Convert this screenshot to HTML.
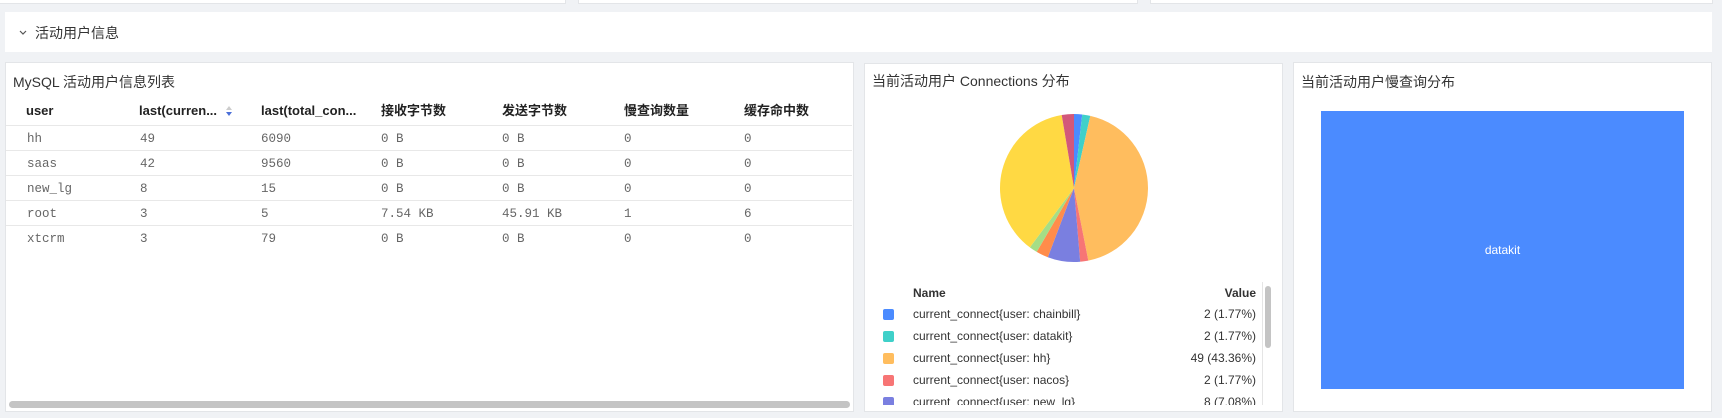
<!DOCTYPE html>
<html><head><meta charset="utf-8"><style>
*{box-sizing:border-box;margin:0;padding:0}
html,body{width:1722px;height:418px;overflow:hidden}
body{background:#f0f2f5;font-family:"Liberation Sans","Noto Sans CJK SC",sans-serif;position:relative;color:#333}
.card{position:absolute;background:#fff;border:1px solid #e3e5e8}
.title{position:absolute;left:8px;top:8px;font-size:14px;color:#333;line-height:18px}
.th{position:absolute;top:103px;font-size:13px;font-weight:bold;color:#222;line-height:16px;height:16px}
.td{position:absolute;font-family:"Liberation Mono",monospace;font-size:12.5px;color:#666;line-height:16px}
.line{position:absolute;left:6px;width:846px;height:1px;background:#e8e8e8}
.lg{position:absolute;font-size:12px;color:#333;line-height:15px}
.sw{position:absolute;width:11px;height:11px;border-radius:2px}
</style></head><body>
<div class="card" style="left:-1px;top:-10px;width:567px;height:14px"></div>
<div class="card" style="left:578px;top:-10px;width:560px;height:14px"></div>
<div class="card" style="left:1150px;top:-10px;width:563px;height:14px"></div>
<div style="position:absolute;left:5px;top:12px;width:1707px;height:40px;background:#fff"></div>
<svg style="position:absolute;left:19px;top:30px" width="8" height="6"><path d="M1 1L4 4L7 1" stroke="#555" fill="none" stroke-width="1.2"/></svg>
<div style="position:absolute;left:35px;top:24px;font-size:14px;color:#333;line-height:18px">活动用户信息</div>

<div class="card" style="left:5px;top:62px;width:849px;height:350px"><div class="title" style="left:7px;top:10px">MySQL 活动用户信息列表</div></div>
<div class="th" style="left:26px">user</div>
<div class="th" style="left:139px">last(curren...</div>
<svg style="position:absolute;left:225px;top:105px" width="8" height="12"><path d="M1 5L4 1L7 5Z" fill="#ccc"/><path d="M1 7L4 11L7 7Z" fill="#4b6fd8"/></svg>
<div class="th" style="left:261px">last(total_con...</div>
<div class="th" style="left:381px">接收字节数</div>
<div class="th" style="left:502px">发送字节数</div>
<div class="th" style="left:624px">慢查询数量</div>
<div class="th" style="left:744px">缓存命中数</div>
<div class="line" style="top:125px"></div><div class="line" style="top:150px"></div><div class="line" style="top:175px"></div><div class="line" style="top:200px"></div><div class="line" style="top:225px"></div>
<div class="td" style="left:27px;top:131px">hh</div><div class="td" style="left:140px;top:131px">49</div><div class="td" style="left:261px;top:131px">6090</div><div class="td" style="left:381px;top:131px">0 B</div><div class="td" style="left:502px;top:131px">0 B</div><div class="td" style="left:624px;top:131px">0</div><div class="td" style="left:744px;top:131px">0</div>
<div class="td" style="left:27px;top:156px">saas</div><div class="td" style="left:140px;top:156px">42</div><div class="td" style="left:261px;top:156px">9560</div><div class="td" style="left:381px;top:156px">0 B</div><div class="td" style="left:502px;top:156px">0 B</div><div class="td" style="left:624px;top:156px">0</div><div class="td" style="left:744px;top:156px">0</div>
<div class="td" style="left:27px;top:181px">new_lg</div><div class="td" style="left:140px;top:181px">8</div><div class="td" style="left:261px;top:181px">15</div><div class="td" style="left:381px;top:181px">0 B</div><div class="td" style="left:502px;top:181px">0 B</div><div class="td" style="left:624px;top:181px">0</div><div class="td" style="left:744px;top:181px">0</div>
<div class="td" style="left:27px;top:206px">root</div><div class="td" style="left:140px;top:206px">3</div><div class="td" style="left:261px;top:206px">5</div><div class="td" style="left:381px;top:206px">7.54 KB</div><div class="td" style="left:502px;top:206px">45.91 KB</div><div class="td" style="left:624px;top:206px">1</div><div class="td" style="left:744px;top:206px">6</div>
<div class="td" style="left:27px;top:231px">xtcrm</div><div class="td" style="left:140px;top:231px">3</div><div class="td" style="left:261px;top:231px">79</div><div class="td" style="left:381px;top:231px">0 B</div><div class="td" style="left:502px;top:231px">0 B</div><div class="td" style="left:624px;top:231px">0</div><div class="td" style="left:744px;top:231px">0</div>
<div style="position:absolute;left:9px;top:401px;width:841px;height:7px;border-radius:4px;background:#c4c4c4"></div>

<div class="card" style="left:864px;top:63px;width:419px;height:349px"><div class="title" style="left:7px;top:8px">当前活动用户 Connections 分布</div></div>
<svg style="position:absolute;left:999px;top:114px" width="150" height="150"><g transform="translate(75,74)">
<path d="M0 0L0 -74A74 74 0 0 1 8.21 -73.54Z" fill="#4b8bff"/>
<path d="M0 0L8.21 -73.54A74 74 0 0 1 16.32 -72.18Z" fill="#3fd0c9"/>
<path d="M0 0L16.32 -72.18A74 74 0 0 1 14.31 72.6Z" fill="#ffbd5e"/>
<path d="M0 0L14.31 72.6A74 74 0 0 1 6.17 73.74Z" fill="#f77575"/>
<path d="M0 0L6.17 73.74A74 74 0 0 1 -26.17 69.22Z" fill="#7a7fe0"/>
<path d="M0 0L-26.17 69.22A74 74 0 0 1 -37.3 63.91Z" fill="#ff8c4b"/>
<path d="M0 0L-37.3 63.91A74 74 0 0 1 -44.15 59.39Z" fill="#a5de86"/>
<path d="M0 0L-44.15 59.39A74 74 0 0 1 -12.29 -72.97Z" fill="#ffd943"/>
<path d="M0 0L-12.29 -72.97A74 74 0 0 1 0 -74Z" fill="#d2587a"/>
</g></svg>
<div style="position:absolute;left:870px;top:282px;width:404px;height:123px;overflow:hidden">
<div class="lg" style="left:43px;top:4px;font-weight:bold">Name</div><div class="lg" style="right:18px;top:4px;font-weight:bold">Value</div>
<div class="sw" style="left:13px;top:27px;background:#4b8bff"></div><div class="lg" style="left:43px;top:25px">current_connect{user: chainbill}</div><div class="lg" style="right:18px;top:25px">2 (1.77%)</div>
<div class="sw" style="left:13px;top:49px;background:#3fd0c9"></div><div class="lg" style="left:43px;top:47px">current_connect{user: datakit}</div><div class="lg" style="right:18px;top:47px">2 (1.77%)</div>
<div class="sw" style="left:13px;top:71px;background:#ffbd5e"></div><div class="lg" style="left:43px;top:69px">current_connect{user: hh}</div><div class="lg" style="right:18px;top:69px">49 (43.36%)</div>
<div class="sw" style="left:13px;top:93px;background:#f77575"></div><div class="lg" style="left:43px;top:91px">current_connect{user: nacos}</div><div class="lg" style="right:18px;top:91px">2 (1.77%)</div>
<div class="sw" style="left:13px;top:115px;background:#7a7fe0"></div><div class="lg" style="left:43px;top:113px">current_connect{user: new_lg}</div><div class="lg" style="right:18px;top:113px">8 (7.08%)</div>
<div style="position:absolute;left:392px;top:0;width:1px;height:123px;background:#e5e5e5"></div>
<div style="position:absolute;left:395px;top:4px;width:6px;height:62px;border-radius:3px;background:#c4c4c4"></div>
</div>

<div class="card" style="left:1293px;top:62px;width:419px;height:350px"><div class="title" style="left:7px;top:10px">当前活动用户慢查询分布</div></div>
<div style="position:absolute;left:1321px;top:111px;width:363px;height:278px;background:#4b8bff;color:#fff;font-size:12px;display:flex;align-items:center;justify-content:center">datakit</div>
</body></html>
